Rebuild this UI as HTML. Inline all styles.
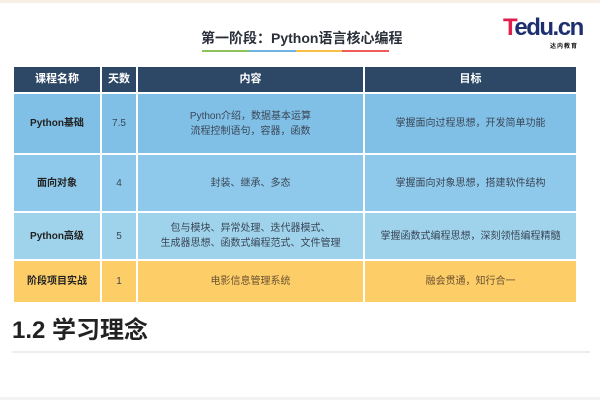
<!DOCTYPE html>
<html><head><meta charset="utf-8"><style>
*{margin:0;padding:0;box-sizing:border-box}
body{width:600px;height:400px;background:#fff;position:relative;overflow:hidden;font-family:"Liberation Sans","Noto Sans CJK SC",sans-serif;color:#333}
.a{position:absolute}
.c{position:absolute;display:flex;align-items:center;justify-content:center;text-align:center;font-size:10px;line-height:15px;color:#3a4656}
.h{background:#2d4766;color:#fff;font-weight:bold;font-size:11px}
.b{font-weight:bold;color:#222}
</style></head><body>
<div class="a" style="left:0;top:0;width:600px;height:3px;background:#f6efe6"></div>
<div class="a" style="left:201px;top:28px;width:188px;text-align:center;font-size:14px;font-weight:bold;color:#2a2f3a;white-space:nowrap">第一阶段：Python语言核心编程</div>
<div class="a" style="left:202px;top:50px;width:47px;height:2px;background:#8dc25a"></div>
<div class="a" style="left:249px;top:50px;width:47px;height:2px;background:#6fb5e2"></div>
<div class="a" style="left:296px;top:50px;width:46px;height:2px;background:#f6bf45"></div>
<div class="a" style="left:342px;top:50px;width:47px;height:2px;background:#ef5a5a"></div>
<div class="a" style="left:503px;top:15px;font-size:24px;font-weight:bold;letter-spacing:-1.5px;line-height:26px"><span style="color:#e0204c">T</span><span style="color:#1d2f6e">edu.cn</span></div>
<div class="a" style="left:550px;top:41px;font-size:6px;font-weight:bold;color:#111;letter-spacing:1px">达内教育</div>

<div class="c h" style="left:14px;top:67px;width:86px;height:25px">课程名称</div>
<div class="c h" style="left:102px;top:67px;width:34px;height:25px">天数</div>
<div class="c h" style="left:138px;top:67px;width:225px;height:25px">内容</div>
<div class="c h" style="left:365px;top:67px;width:211px;height:25px">目标</div>

<div class="c b" style="left:14px;top:94px;width:86px;height:59px;background:#80c0e7">Python基础</div>
<div class="c" style="left:102px;top:94px;width:34px;height:59px;background:#80c0e7">7.5</div>
<div class="c" style="left:138px;top:94px;width:225px;height:59px;background:#80c0e7">Python介绍，数据基本运算<br>流程控制语句，容器，函数</div>
<div class="c" style="left:365px;top:94px;width:211px;height:59px;background:#80c0e7">掌握面向过程思想，开发简单功能</div>

<div class="c b" style="left:14px;top:155px;width:86px;height:56px;background:#8ec8ea">面向对象</div>
<div class="c" style="left:102px;top:155px;width:34px;height:56px;background:#8ec8ea">4</div>
<div class="c" style="left:138px;top:155px;width:225px;height:56px;background:#8ec8ea">封装、继承、多态</div>
<div class="c" style="left:365px;top:155px;width:211px;height:56px;background:#8ec8ea">掌握面向对象思想，搭建软件结构</div>

<div class="c b" style="left:14px;top:213px;width:86px;height:46px;background:#9fd3ec">Python高级</div>
<div class="c" style="left:102px;top:213px;width:34px;height:46px;background:#9fd3ec">5</div>
<div class="c" style="left:138px;top:213px;width:225px;height:46px;background:#9fd3ec">包与模块、异常处理、迭代器模式、<br>生成器思想、函数式编程范式、文件管理</div>
<div class="c" style="left:365px;top:213px;width:211px;height:46px;background:#9fd3ec">掌握函数式编程思想，深刻领悟编程精髓</div>

<div class="c b" style="left:14px;top:261px;width:86px;height:41px;background:#fdcd68">阶段项目实战</div>
<div class="c" style="left:102px;top:261px;width:34px;height:41px;background:#fdcd68">1</div>
<div class="c" style="left:138px;top:261px;width:225px;height:41px;background:#fdcd68;color:#6b5230">电影信息管理系统</div>
<div class="c" style="left:365px;top:261px;width:211px;height:41px;background:#fdcd68;color:#6b5230">融会贯通，知行合一</div>

<div class="a" style="left:12px;top:316px;font-size:24px;font-weight:bold;color:#222;line-height:30px">1.2 学习理念</div>
<div class="a" style="left:12px;top:351px;width:578px;height:2px;background:#eeeeee"></div>
<div class="a" style="left:0;top:397px;width:600px;height:3px;background:#f3f3f3"></div>
</body></html>
